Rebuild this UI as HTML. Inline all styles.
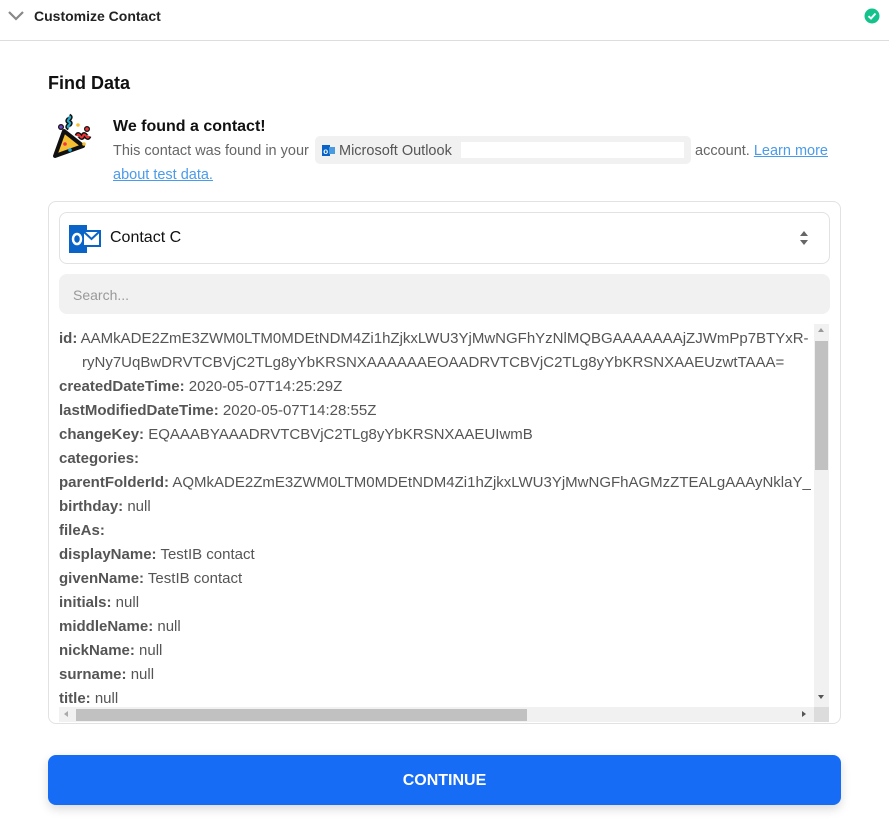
<!DOCTYPE html>
<html><head><style>
*{box-sizing:border-box;margin:0;padding:0}
body{width:889px;height:824px;background:#fff;font-family:"Liberation Sans",sans-serif;color:#222;position:relative;overflow:hidden}
.abs{position:absolute}
.row{position:absolute;left:59px;font-size:15px;color:#555;white-space:nowrap;line-height:24px}
.row b{color:#555;font-weight:bold}
</style></head><body>
<div class="abs" style="left:0;top:0;width:889px;height:41px;border-bottom:1px solid #ddd"></div>
<svg class="abs" style="left:8px;top:10px" width="16" height="12"><path d="M1 2 L8 9 L15 2" stroke="#888" stroke-width="2.2" fill="none"/></svg>
<div class="abs" style="left:34px;top:8px;font-size:14px;font-weight:bold;color:#222">Customize Contact</div>
<svg class="abs" style="left:864px;top:8px" width="16" height="16"><circle cx="8" cy="8" r="7.5" fill="#13c38b"/><path d="M4.5 8.2 L7 10.5 L11.5 5.5" stroke="#fff" stroke-width="2" fill="none"/></svg>

<div class="abs" style="left:48px;top:73px;font-size:18px;font-weight:bold;color:#111">Find Data</div>
<svg class="abs" style="left:50px;top:113px" width="50" height="48">
<path d="M5 43 L14 18 L33 33 Z" fill="#f6c034" stroke="#111" stroke-width="4" stroke-linejoin="round"/>
<circle cx="15" cy="31" r="1.8" fill="#e34"/><circle cx="20" cy="37" r="1.8" fill="#2ad"/>
<path d="M19 3 c4 2 -4 4 0 6 c4 2 -4 4 0 6" stroke="#111" stroke-width="5" fill="none"/>
<path d="M19 3 c4 2 -4 4 0 6 c4 2 -4 4 0 6" stroke="#2ac" stroke-width="2" fill="none"/>
<path d="M27 23 c2 -5 4 5 6 0 c2 -5 4 5 6 0" stroke="#111" stroke-width="5" fill="none"/>
<path d="M27 23 c2 -5 4 5 6 0 c2 -5 4 5 6 0" stroke="#e33" stroke-width="2" fill="none"/>
<circle cx="11" cy="14" r="3" fill="#111"/><circle cx="11" cy="14" r="1.8" fill="#74c"/>
<circle cx="37" cy="16" r="3" fill="#111"/><circle cx="37" cy="16" r="1.8" fill="#e33"/>
<circle cx="28" cy="12" r="1.8" fill="#f6c034"/><circle cx="34" cy="31" r="1.8" fill="#f6c034"/>
</svg>
<div class="abs" style="left:113px;top:118px;font-size:16px;font-weight:bold;color:#111">We found a contact!</div>
<div class="abs" style="left:113px;top:143px;font-size:14.5px;color:#666">This contact was found in your</div>
<div class="abs" style="left:315px;top:136px;width:376px;height:28px;background:#f1f1f1;border-radius:5px"></div>
<div class="abs" style="left:461px;top:142px;width:223px;height:16px;background:#fff"></div>
<svg class="abs" style="left:322px;top:144px" width="13" height="13"><rect x="0" y="1" width="8" height="11" fill="#0a64c8"/><rect x="7" y="3" width="6" height="7" fill="#4a9ae0"/><text x="1.2" y="10" font-size="8" fill="#fff" font-family="Liberation Sans" font-weight="bold">o</text></svg>
<div class="abs" style="left:339px;top:143px;font-size:14.5px;color:#555">Microsoft Outlook</div>
<div class="abs" style="left:695px;top:143px;font-size:14.5px;color:#666">account. <span style="color:#4a9be9;text-decoration:underline">Learn more</span></div>
<div class="abs" style="left:113px;top:167px;font-size:14.5px;color:#4a9be9;text-decoration:underline">about test data.</div>

<div class="abs" style="left:48px;top:201px;width:793px;height:523px;border:1px solid #e2e2e2;border-radius:8px"></div>
<div class="abs" style="left:59px;top:212px;width:771px;height:52px;border:1px solid #e2e2e2;border-radius:8px"></div>
<svg class="abs" style="left:69px;top:224px" width="32" height="30"><rect x="0" y="1" width="18" height="28" fill="#0a64c8"/><rect x="14" y="7" width="17" height="15" fill="#fff" stroke="#0a64c8" stroke-width="2"/><path d="M15 8 L22.5 15 L30 8" stroke="#0a64c8" stroke-width="2" fill="none"/><ellipse cx="8" cy="15" rx="4" ry="5" stroke="#fff" stroke-width="2.5" fill="none"/></svg>
<div class="abs" style="left:110px;top:229px;font-size:16px;color:#111">Contact C</div>
<svg class="abs" style="left:798px;top:230px" width="12" height="16"><path d="M2 6 L6 1 L10 6Z M2 10 L6 15 L10 10Z" fill="#666"/></svg>
<div class="abs" style="left:59px;top:274px;width:771px;height:40px;background:#f1f1f1;border-radius:8px"></div>
<div class="abs" style="left:73px;top:287px;font-size:14px;color:#999">Search...</div>

<div class="abs" style="left:49px;top:324px;width:765px;height:383px;overflow:hidden">
<div class="row" style="left:10px;top:3px"><b>id:</b> AAMkADE2ZmE3ZWM0LTM0MDEtNDM4Zi1hZjkxLWU3YjMwNGFhYzNlMQBGAAAAAAAjZJWmPp7BTYxR-</div>
<div class="row" style="left:33px;top:27px">ryNy7UqBwDRVTCBVjC2TLg8yYbKRSNXAAAAAAEOAADRVTCBVjC2TLg8yYbKRSNXAAEUzwtTAAA=</div>
<div class="row" style="left:10px;top:51px"><b>createdDateTime:</b> 2020-05-07T14:25:29Z</div>
<div class="row" style="left:10px;top:75px"><b>lastModifiedDateTime:</b> 2020-05-07T14:28:55Z</div>
<div class="row" style="left:10px;top:99px"><b>changeKey:</b> EQAAABYAAADRVTCBVjC2TLg8yYbKRSNXAAEUIwmB</div>
<div class="row" style="left:10px;top:123px"><b>categories:</b></div>
<div class="row" style="left:10px;top:147px"><b>parentFolderId:</b> AQMkADE2ZmE3ZWM0LTM0MDEtNDM4Zi1hZjkxLWU3YjMwNGFhAGMzZTEALgAAAyNklaY_</div>
<div class="row" style="left:10px;top:171px"><b>birthday:</b> null</div>
<div class="row" style="left:10px;top:195px"><b>fileAs:</b></div>
<div class="row" style="left:10px;top:219px"><b>displayName:</b> TestIB contact</div>
<div class="row" style="left:10px;top:243px"><b>givenName:</b> TestIB contact</div>
<div class="row" style="left:10px;top:267px"><b>initials:</b> null</div>
<div class="row" style="left:10px;top:291px"><b>middleName:</b> null</div>
<div class="row" style="left:10px;top:315px"><b>nickName:</b> null</div>
<div class="row" style="left:10px;top:339px"><b>surname:</b> null</div>
<div class="row" style="left:10px;top:363px"><b>title:</b> null</div>
</div>
<div class="abs" style="left:814px;top:324px;width:15px;height:383px;background:#f1f1f1"></div>
<div class="abs" style="left:815px;top:341px;width:13px;height:129px;background:#c1c1c1"></div>
<div class="abs" style="left:818px;top:328px;border:3.5px solid transparent;border-bottom:4px solid #999;border-top:0"></div>
<div class="abs" style="left:818px;top:695px;border:3.5px solid transparent;border-top:4px solid #555;border-bottom:0"></div>
<div class="abs" style="left:59px;top:707px;width:755px;height:15px;background:#f1f1f1"></div>
<div class="abs" style="left:814px;top:707px;width:15px;height:15px;background:#dcdcdc"></div>
<div class="abs" style="left:76px;top:709px;width:451px;height:12px;background:#c1c1c1"></div>
<div class="abs" style="left:64px;top:711px;border:3.5px solid transparent;border-right:4px solid #aaa;border-left:0"></div>
<div class="abs" style="left:802px;top:711px;border:3.5px solid transparent;border-left:4px solid #555;border-right:0"></div>

<div class="abs" style="left:48px;top:755px;width:793px;height:50px;background:#166cf5;border-radius:8px;box-shadow:0 4px 10px rgba(0,0,0,0.15);color:#fff;font-weight:bold;font-size:16px;text-align:center;line-height:51px">CONTINUE</div>
</body></html>
